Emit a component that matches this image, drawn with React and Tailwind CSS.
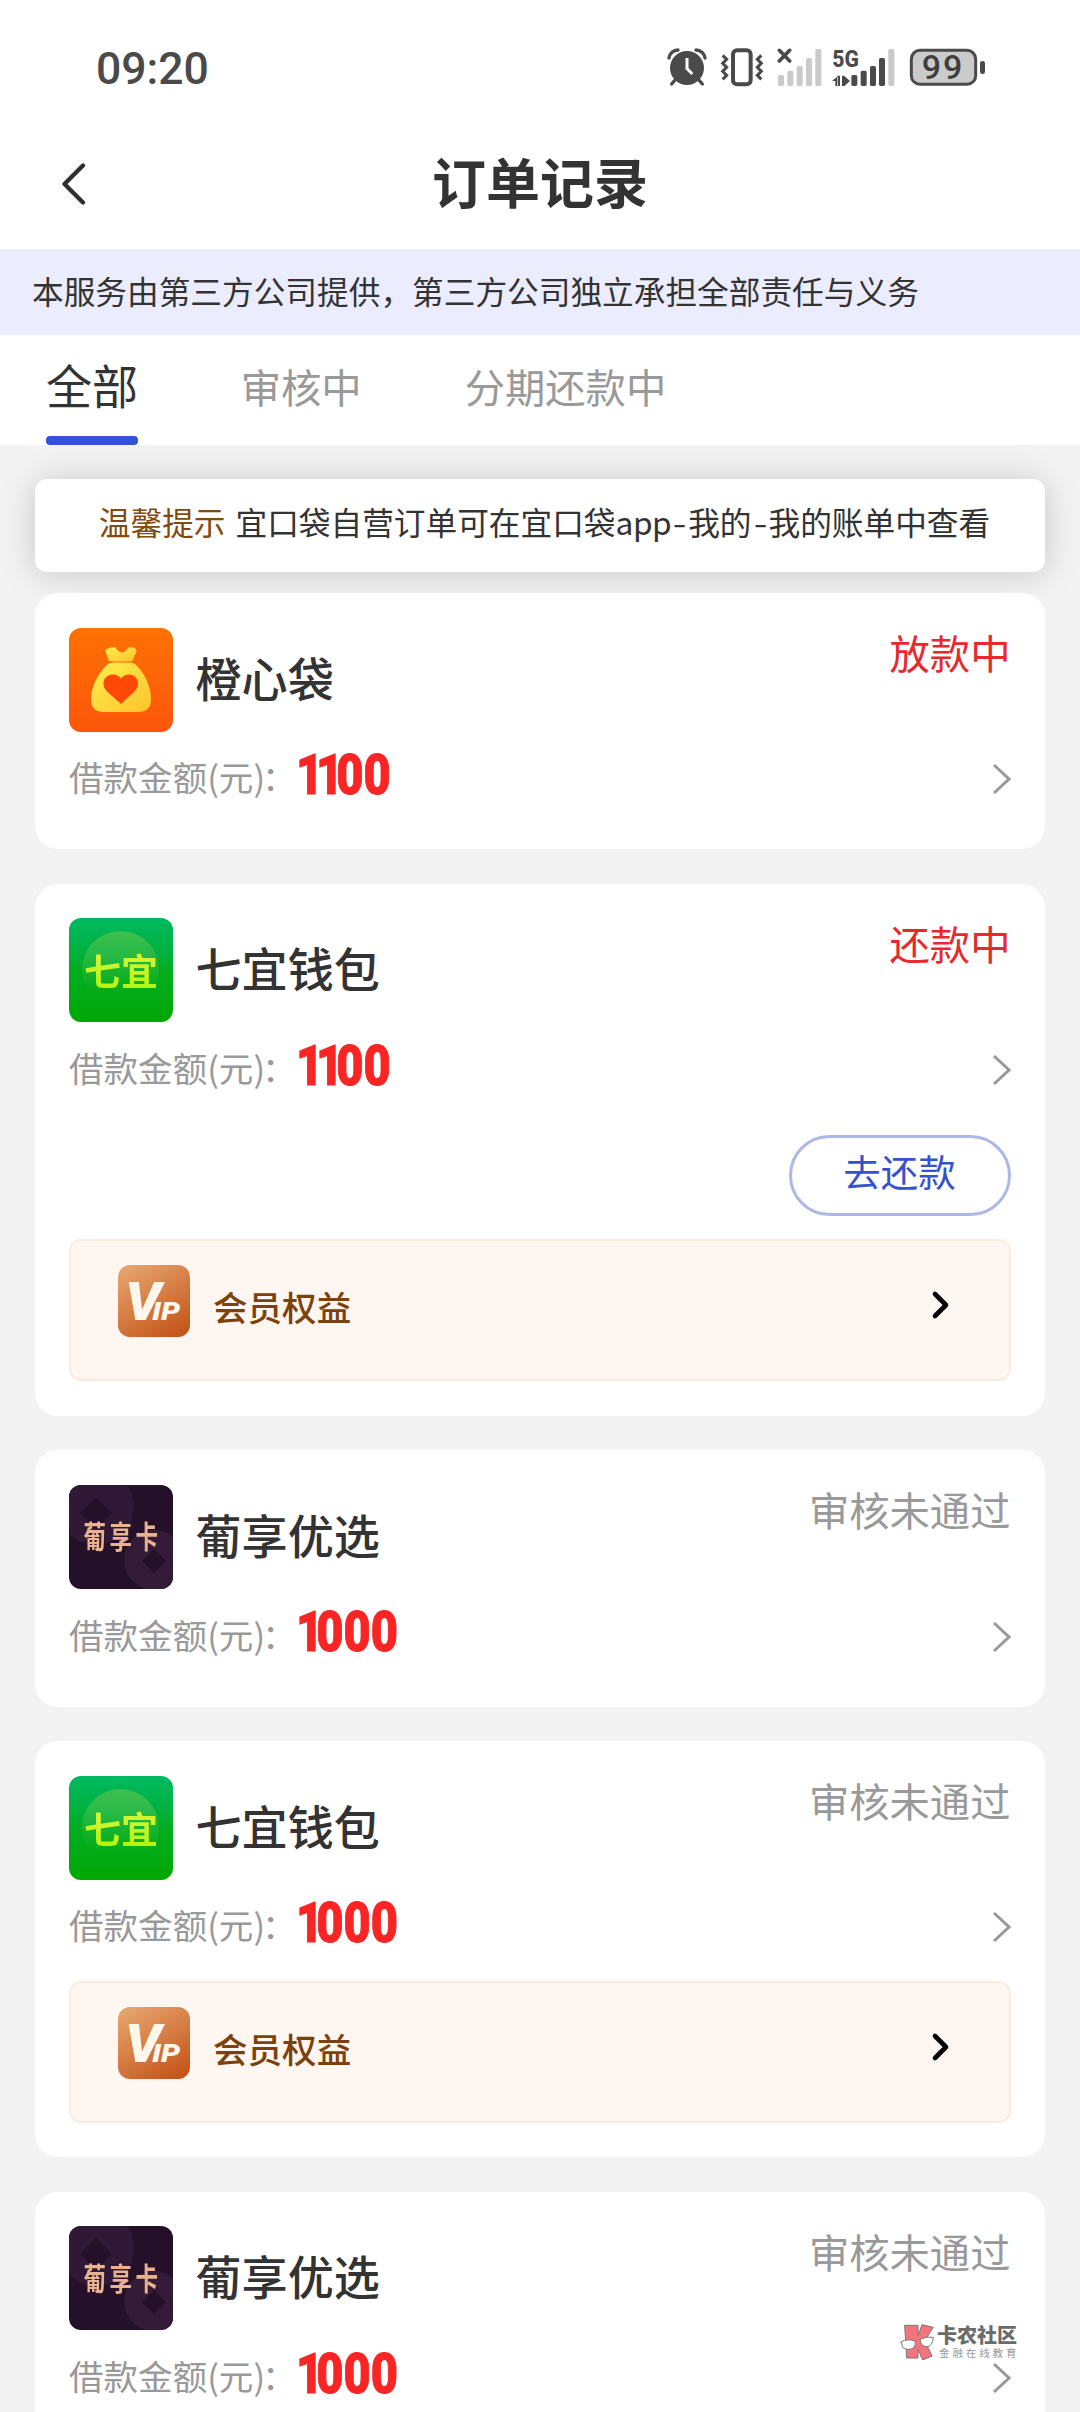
import React from "react";

const ink = "#4a4a4a";

function StatusBar() {
  return (
    <div className="flex h-[120px] items-start justify-between pl-[96px] pr-[94px] pt-[48px]">
      <div className="mt-[-1px] font-['Roboto'] text-[44.500px] font-medium leading-[44px] text-[#4a4a4a]">09:20</div>
      <div className="flex items-start">
        <svg className="h-[39px] w-[40px]" viewBox="80 54 120 117" fill="none">
          <circle cx="140" cy="114" r="51" fill={ink} />
          <path d="M86 84a28 28 0 0 1 27-24M194 84a28 28 0 0 0-27-24" stroke={ink} strokeWidth="10" strokeLinecap="round" />
          <path d="M104 150l-10 12M176 150l10 12" stroke={ink} strokeWidth="10" strokeLinecap="round" />
          <path d="M140 84v32l16 16" stroke="#fff" strokeWidth="9" />
        </svg>
        <svg className="ml-[12px] h-[39px] w-[46px]" viewBox="237 54 138 117" fill="none" stroke={ink}>
          <rect x="279" y="61" width="53" height="102" rx="12" strokeWidth="12" />
          <path d="M248 76l12 12-12 12 12 12-12 12 12 12-12 12" strokeWidth="9" />
          <path d="M364 76l-12 12 12 12-12 12 12 12-12 12 12 12" strokeWidth="9" />
        </svg>
        <svg className="ml-[12px] h-[39px] w-[46px]" viewBox="411 54 138 117">
          <path d="M418 61l31 32M449 61l-31 32" stroke={ink} strokeWidth="11" strokeLinecap="round" />
          <g fill="#cacaca">
            <rect x="414" y="135" width="18" height="33" rx="5" />
            <rect x="442" y="122" width="18" height="46" rx="5" />
            <rect x="470" y="108" width="18" height="60" rx="5" />
            <rect x="498" y="84" width="18" height="84" rx="5" />
            <rect x="526" y="57" width="18" height="111" rx="5" />
          </g>
        </svg>
        <svg className="ml-[8px] h-[39px] w-[66px] overflow-visible" viewBox="573 54 198 117">
          <text x="577" y="110" fontFamily="Roboto" fontWeight="800" fontSize="74" textLength="80" lengthAdjust="spacingAndGlyphs" fill={ink}>5G</text>
          <path d="M593 168v-29l-17 14h10v15zM591 168V137h9v31zM606 168V137h7v31zM613 138l17 15-17 15z" fill={ink} />
          <g fill={ink}>
            <rect x="634" y="135" width="18" height="33" rx="5" />
            <rect x="662" y="122" width="18" height="46" rx="5" />
            <rect x="690" y="108" width="18" height="60" rx="5" />
            <rect x="717" y="84" width="18" height="84" rx="5" />
          </g>
          <rect x="745" y="57" width="18" height="111" rx="5" fill="#cacaca" />
        </svg>
        <svg className="ml-[12px] h-[39px] w-[77px]" viewBox="807 54 231 117">
          <rect x="814" y="61" width="193" height="102" rx="26" fill="#cbcbcb" stroke={ink} strokeWidth="9" />
          <rect x="1020" y="93" width="15" height="39" rx="7" fill={ink} />
          <text x="909" y="148" textAnchor="middle" fontFamily="Roboto" fontWeight="500" fontSize="102" letterSpacing="6" fill="#3f3f3f">99</text>
        </svg>
      </div>
    </div>
  );
}

function BagLogo() {
  return (
    <svg className="size-[104px] rounded-[12px]" viewBox="0 0 104 104">
      <defs>
        <linearGradient id="bagBg" x1="0" y1="0" x2="0" y2="1">
          <stop offset="0" stopColor="#ff7104" />
          <stop offset="1" stopColor="#fd560b" />
        </linearGradient>
        <linearGradient id="bagBody" x1="0" y1="0" x2="1" y2="1">
          <stop offset="0" stopColor="#fff04e" />
          <stop offset="1" stopColor="#fdc22c" />
        </linearGradient>
      </defs>
      <rect width="104" height="104" fill="url(#bagBg)" />
      <path d="M39.500 32l-3-9q0-2 3-2.500q3-2 7-1q3 5 7 5q3-1 6-5q4-1 7 1q2 3 0 5q-1 2-3 7.500q-12 1-24 0z" fill="url(#bagBody)" />
      <path d="M39 36q2-1.500 5-1.500h17q3 0 5 1.500c9 8 16 22 16 35q0 13-13 13H35q-13 0-13-13c0-13 8-27 17-35z" fill="url(#bagBody)" />
      <path d="M52 76L38 63.500q-4-4-3.500-9c1-8 12-11 17.500-4c5.500-7 16-4 17 4q.5 5-3.500 9z" fill="#fe4a05" />
    </svg>
  );
}

function QiyiLogo() {
  return (
    <div className="relative flex size-[104px] items-center justify-center overflow-hidden rounded-[12px] bg-gradient-to-b from-[#00b961] via-[#02ad1f] to-[#00a800]">
      <div className="absolute left-[13px] top-[13px] size-[77px] rounded-full bg-gradient-to-b from-[#3fbf4c] to-[#3fbf4c]/0 to-80%" />
      <div className="relative bg-gradient-to-b from-[#dcf53a] to-[#aef400] bg-clip-text text-[37px] font-bold leading-[46px] text-transparent">七宜</div>
    </div>
  );
}

function PuxiangLogo() {
  return (
    <div className="relative flex size-[104px] items-center justify-center overflow-hidden rounded-[12px] bg-[#241029]">
      <svg className="absolute inset-0 size-full" viewBox="0 0 104 104">
        <circle cx="27" cy="22" r="38" fill="#301937" />
        <circle cx="85" cy="75" r="30" fill="#341c38" />
        <path d="M27 12l16 16-16 16-16-16zM85 64l12 12-12 12-12-12z" fill="#241029" />
      </svg>
      <div className="relative scale-y-135 pb-[3px] pl-[3px] text-[22.500px] font-bold leading-[26px] tracking-[3.500px] text-[#e8b38e]">葡享卡</div>
    </div>
  );
}

const LOGOS = { bag: BagLogo, qiyi: QiyiLogo, puxiang: PuxiangLogo };

function VipLogo() {
  return (
    <svg className="size-[72px] rounded-[12px]" viewBox="0 0 72 72">
      <defs>
        <linearGradient id="vipBg" x1="0.2" y1="0" x2="0.8" y2="1">
          <stop offset="0" stopColor="#e6a36c" />
          <stop offset="1" stopColor="#c4551a" />
        </linearGradient>
      </defs>
      <rect width="72" height="72" fill="url(#vipBg)" />
      <g fill="#fff6ec" fontFamily="Roboto" fontStyle="italic" fontWeight="900">
        <text x="7" y="55" fontSize="53" textLength="36" lengthAdjust="spacingAndGlyphs">V</text>
        <text x="34" y="55" fontSize="26" textLength="9" lengthAdjust="spacingAndGlyphs">I</text>
        <text x="43" y="55" fontSize="26" textLength="19" lengthAdjust="spacingAndGlyphs">P</text>
      </g>
    </svg>
  );
}

function VipRow() {
  return (
    <div className="flex h-[142px] items-start rounded-[12px] border-2 border-[#fbece2] bg-[#fef7f1] pl-[47px] pr-[58px] pt-[24px]">
      <VipLogo />
      <div className="ml-[23px] mt-[23px] text-[34.56px] font-medium leading-[36px] text-[#7c410c]">会员权益</div>
      <svg className="ml-auto mt-[25px] h-[30px] w-[20px]" viewBox="0 0 20 30" fill="none">
        <path d="M4 4l11 11L4 26" stroke="#000" strokeWidth="4.600" strokeLinecap="round" strokeLinejoin="round" />
      </svg>
    </div>
  );
}

function Amount({ value }) {
  const ones = value.match(/^1+/)[0];
  return (
    <div className="ml-[-5px] origin-left scale-x-84 font-['Roboto'] text-[56px] font-black leading-[56px] text-[#f92525] [-webkit-text-stroke:1px_#f92525]">
      <span className="tracking-[-8.500px]">{ones}</span>
      <span>{value.slice(ones.length)}</span>
    </div>
  );
}

function OrderCard({ logo, name, status, active, amount, repay, vip }) {
  const Logo = LOGOS[logo];
  return (
    <div className="rounded-[23px] bg-white py-[34.500px] pl-[34px] pr-[34.500px]">
      <div className="flex h-[103.800px] items-start">
        <Logo />
        <div className="ml-[22.500px] mt-[26px] text-[46.08px] font-medium leading-[46px] text-[#333]">{name}</div>
        <div className={`ml-auto mt-[4.500px] text-[40.32px] leading-[40px] ${active ? "text-[#e8282c]" : "text-[#999]"}`}>{status}</div>
      </div>
      <div className="flex h-[83.5px] items-start">
        <div className="mt-[27px] w-[232px] whitespace-nowrap text-[34.56px] leading-[36px] text-[#999]">
          借款金额(元<span className="tracking-[-3px]">)</span>：
        </div>
        <div className="mt-[15.500px]">
          <Amount value={amount} />
        </div>
        <svg className="ml-auto mt-[32px] h-[32px] w-[20px]" viewBox="0 0 20 32" fill="none">
          <path d="M3 2l15 14L3 30" stroke="#999" strokeWidth="3" />
        </svg>
      </div>
      {repay && (
        <div className="mb-[5.700px] mt-[29px] flex justify-end">
          <button className="flex h-[81px] w-[222px] items-center justify-center rounded-full border-[3px] border-[#aeb8e6] pb-[8px] text-[37.44px] leading-[40px] text-[#3451cf]">{repay}</button>
        </div>
      )}
      {vip && (
        <div className="pt-[18px]">
          <VipRow />
        </div>
      )}
    </div>
  );
}

const ORDERS = [
  { logo: "bag", name: "橙心袋", status: "放款中", active: true, amount: "1100" },
  { logo: "qiyi", name: "七宜钱包", status: "还款中", active: true, amount: "1100", repay: "去还款", vip: true },
  { logo: "puxiang", name: "葡享优选", status: "审核未通过", amount: "1000" },
  { logo: "qiyi", name: "七宜钱包", status: "审核未通过", amount: "1000", vip: true },
  { logo: "puxiang", name: "葡享优选", status: "审核未通过", amount: "1000" },
];

function Watermark() {
  return (
    <div className="absolute left-[900px] top-[2324px] flex items-start">
      <svg className="h-[36px] w-[35px]" viewBox="0 0 105 108">
        <path d="M14 4h40v30L66 2l34 8-26 40 22 46-28 12-14-32v26H20z" fill="#f5737d" stroke="#777" strokeWidth="3" strokeLinejoin="round" />
        <path d="M2 54q22-12 44-2q2 24-20 24T6 60zM60 46q20-10 40-6q-2 28-20 28T60 46z" fill="#fff" stroke="#777" strokeWidth="3" />
      </svg>
      <div className="ml-[2px] flex flex-col">
        <div className="text-[20px] font-black leading-[21px] text-[#6b6b6b]">卡农社区</div>
        <div className="ml-[2px] mt-px whitespace-nowrap text-[10.5px] leading-[14px] tracking-[2.900px] text-[#999]">金融在线教育</div>
      </div>
    </div>
  );
}

export default function App() {
  return (
    <div className="relative h-[2412px] w-[1080px] overflow-hidden bg-[#f3f3f3] font-['Noto_Sans_CJK_SC',sans-serif] text-[#333]">
      <div className="bg-white">
        <StatusBar />
        <div className="grid h-[129px] grid-cols-[1fr_auto_1fr] items-start">
          <svg className="ml-[58px] mt-[40px] h-[48px] w-[30px]" viewBox="0 0 30 48" fill="none">
            <path d="M25 5.500L6.500 24L25 42.500" stroke="#2e2e2e" strokeWidth="4.400" strokeLinecap="round" strokeLinejoin="round" />
          </svg>
          <h1 className="mt-[34px] text-[54px] font-bold leading-[54px]">订单记录</h1>
        </div>
      </div>
      <div className="flex h-[86px] items-center bg-[#ebecfd] pb-[4px] pl-[32px] text-[31.680px] leading-[36px]">本服务由第三方公司提供，第三方公司独立承担全部责任与义务</div>
      <div className="flex h-[110px] items-start bg-white pl-[46px]">
        <div className="flex h-full flex-col justify-between pt-[26px]">
          <div className="text-[46.080px] leading-[46px]">全部</div>
          <div className="h-[9px] rounded-[4px] bg-[#3451dc]" />
        </div>
        <div className="ml-[102.500px] mt-[31px] text-[40.320px] leading-[40px] text-[#999]">审核中</div>
        <div className="ml-[103px] mt-[31px] text-[40.320px] leading-[40px] text-[#999]">分期还款中</div>
      </div>
      <div className="flex flex-col px-[35px] pt-[34px]">
        <div className="flex h-[93px] items-center justify-center whitespace-nowrap rounded-[12px] bg-white pb-[9px] pl-[9px] text-[31.680px] leading-[36px] shadow-[0_2px_36px_rgba(0,0,0,0.18)]">
          <span className="mr-[10px] text-[#804a10]">温馨提示</span>
          <span>
            宜口袋自营订单可在宜口袋<span className="tracking-[-0.500px]">app</span>
            <span className="inline-block w-[17px] scale-x-125 text-center">-</span>我的<span className="inline-block w-[17px] scale-x-125 text-center">-</span>我的账单中查看
          </span>
        </div>
        <div className="mt-[21px] flex flex-col gap-[34.500px]">
          {ORDERS.map((order, i) => (
            <OrderCard key={i} {...order} />
          ))}
        </div>
      </div>
      <Watermark />
    </div>
  );
}
